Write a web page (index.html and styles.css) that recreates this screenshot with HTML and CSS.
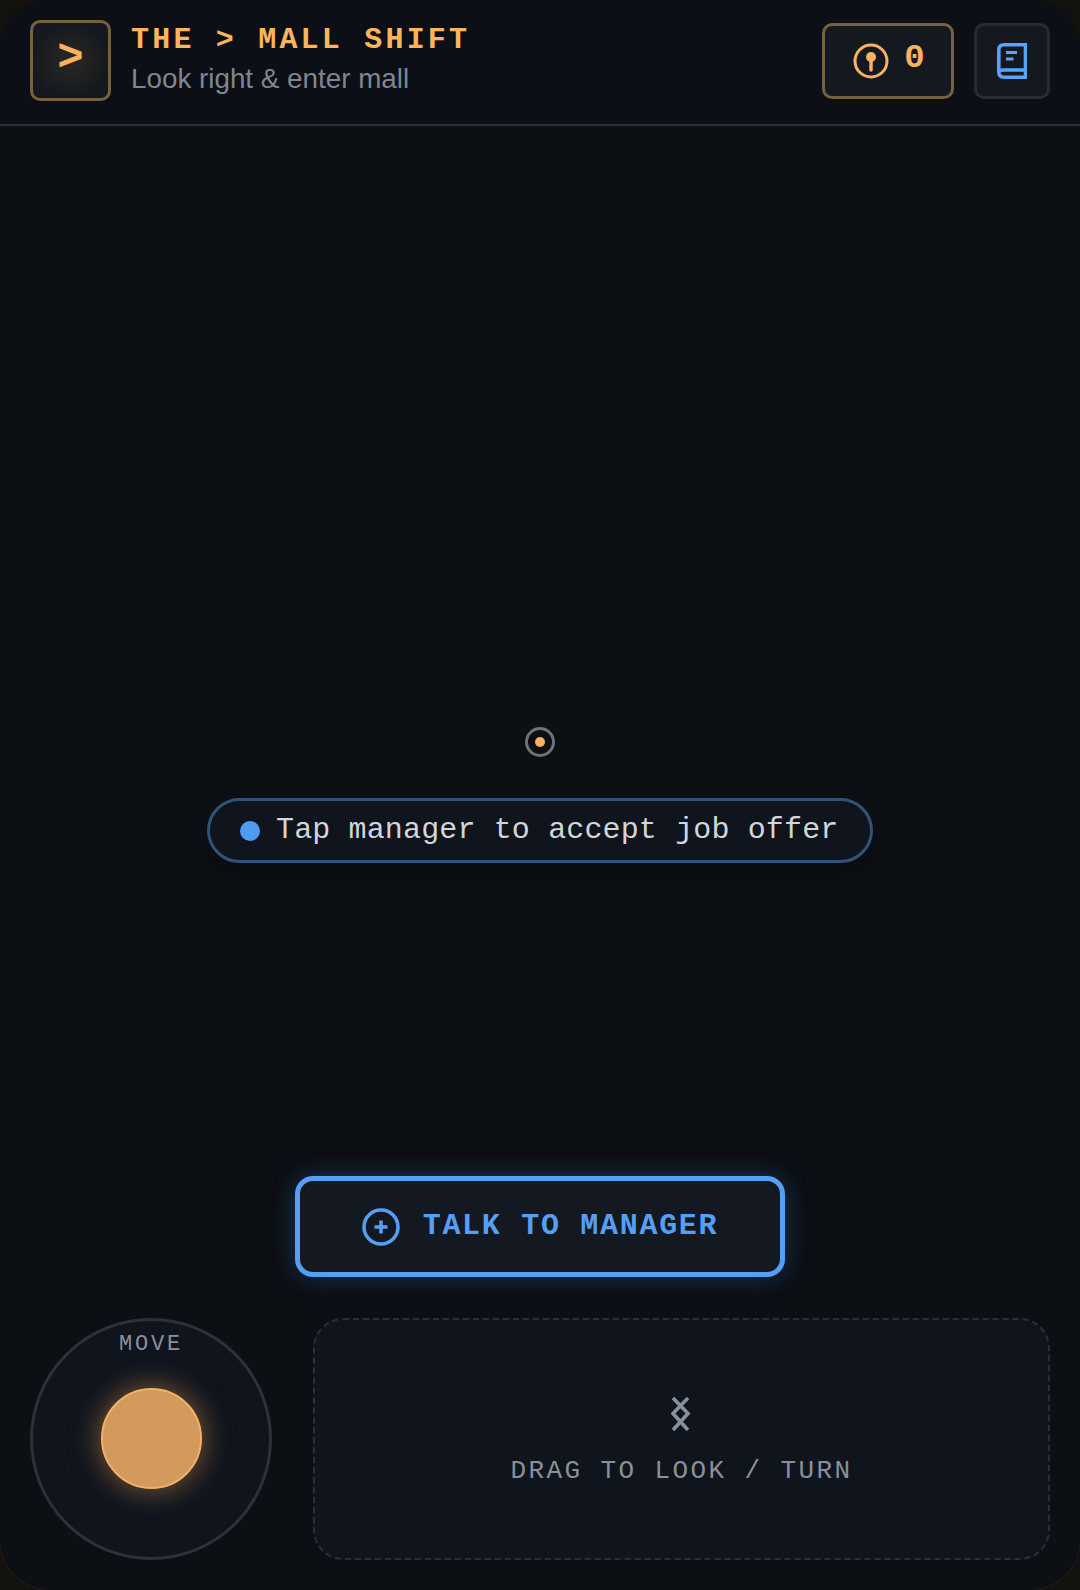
FILE: index.html
```html
<!DOCTYPE html>
<html lang="en">
<head>
<meta charset="utf-8">
<title>The Mall Shift</title>
<link rel="stylesheet" href="styles.css">
</head>
<body>
<div class="shell">
  <header class="topbar">
    <div class="logo">&gt;</div>
    <div class="titles">
      <div class="title">THE &gt; MALL SHIFT</div>
      <div class="subtitle">Look right &amp; enter mall</div>
    </div>
    <div class="chip chip-keys">
      <svg class="icon-key" viewBox="0 0 36 36" aria-hidden="true">
        <circle class="key-ring" cx="18" cy="18" r="16"/>
        <circle class="key-dot" cx="18" cy="14" r="5"/>
        <path class="key-stem" d="M18 15V27"/>
      </svg>
      <span class="key-count">0</span>
    </div>
    <div class="chip chip-book">
      <svg class="icon-book" viewBox="0 0 30 36" aria-hidden="true">
        <path class="book-line" d="M28.5 1.800H7Q1.800 1.800 1.800 7V29Q1.800 34.200 7 34.200H28.500ZM1.800 29.500Q1.800 27 7 27H28.500"/>
        <path class="book-line thin" d="M9 9.500H20M9 16H16.500"/>
      </svg>
    </div>
  </header>

  <main class="stage">
    <div class="reticle"><span class="reticle-dot"></span></div>
    <div class="hint"><span class="hint-dot"></span><span class="hint-text">Tap manager to accept job offer</span></div>
    <button class="action" type="button">
      <svg class="icon-plus" viewBox="0 0 38 38" aria-hidden="true">
        <circle class="plus-ring" cx="19" cy="19" r="17"/>
        <path class="plus-bar" d="M19 12.500V25.500M12.500 19H25.500"/>
      </svg>
      <span class="action-text">TALK TO MANAGER</span>
    </button>
  </main>

  <footer class="controls">
    <div class="joystick">
      <span class="joy-label">MOVE</span>
      <span class="knob"></span>
    </div>
    <div class="lookpad">
      <svg class="icon-drag" viewBox="0 0 20 36" aria-hidden="true">
        <path class="drag-line" d="M2 2L17 17.500L2 34M17 2L2 17.500L17 34"/>
      </svg>
      <span class="look-label">DRAG TO LOOK / TURN</span>
    </div>
  </footer>
</div>
</body>
</html>
```

FILE: styles.css
```css
* { box-sizing: border-box; }
html, body { margin: 0; height: 100%; background: #14120e; }
body { width: 1080px; height: 1590px; overflow: hidden; font-family: "Liberation Mono", monospace; }

.shell {
  width: 1082px;
  height: 1592px;
  margin: -1px;
  display: flex;
  flex-direction: column;
  background: #0c0f14;
  border-radius: 52px;
  box-shadow: inset 0 0 0 1px #211e1a;
  overflow: hidden;
}

.topbar {
  height: 127px;
  flex: none;
  display: flex;
  align-items: center;
  padding: 0 31px 3px;
  background: #0c0f16;
  border-bottom: 2px solid #2a2e38;
}
.logo {
  width: 81px;
  height: 81px;
  flex: none;
  display: flex;
  align-items: center;
  justify-content: center;
  padding-bottom: 5px;
  border: 3px solid #75603f;
  border-radius: 10px;
  background: radial-gradient(circle at 50% 50%, #2b2822 0, #15191f 70%);
  color: #f9b25f;
  font-size: 44px;
  font-weight: 700;
}
.titles { flex: 1; margin-left: 20px; display: flex; flex-direction: column; gap: 4px; margin-top: -1px; }
.title { font-size: 30px; line-height: 34px; font-weight: 700; letter-spacing: 3.200px; color: #fcb55f; white-space: nowrap; }
.subtitle { font-family: "Liberation Sans", sans-serif; font-size: 27.800px; line-height: 35px; color: #7f8693; white-space: nowrap; }

.chip {
  height: 76px;
  margin-top: 1px;
  display: flex;
  align-items: center;
  justify-content: center;
  background: #141920;
  border-radius: 10px;
  flex: none;
}
.chip-keys { width: 132px; gap: 15px; padding-left: 2px; border: 3px solid #75603f; margin-right: 20px; }
.chip-book { width: 76px; border: 3px solid #272b33; }
.icon-key { width: 36px; height: 36px; }
.key-ring { fill: none; stroke: #f9b25f; stroke-width: 3px; }
.key-dot { fill: #f9b25f; }
.key-stem { stroke: #f9b25f; stroke-width: 3.500px; stroke-linecap: round; fill: none; }
.key-count { color: #f9b25f; font-size: 34px; font-weight: 700; line-height: 1; margin-top: -6px; }
.icon-book { width: 30px; height: 36px; }
.book-line { fill: none; stroke: #5aa4f7; stroke-width: 3.600px; }
.book-line.thin { stroke-width: 3px; }

.stage {
  flex: 1;
  display: flex;
  flex-direction: column;
  align-items: center;
  padding-top: 601px;
  min-height: 0;
}
.reticle {
  width: 30px;
  height: 30px;
  flex: none;
  border: 3px solid #6f7277;
  border-radius: 50%;
  display: flex;
  align-items: center;
  justify-content: center;
}
.reticle-dot { width: 10px; height: 10px; border-radius: 50%; background: #f9b25f; }
.hint {
  margin-top: 41px;
  width: 666px;
  height: 65px;
  flex: none;
  display: flex;
  align-items: center;
  gap: 16px;
  padding-left: 30px;
  background: #10141c;
  border: 3px solid #325379;
  border-radius: 33px;
  color: #d2d6da;
  font-size: 30px;
  letter-spacing: .14px;
  white-space: nowrap;
  box-shadow: 0 8px 30px rgba(0, 0, 0, .25);
}
.hint-text { padding-bottom: 2px; }
.hint-dot { width: 20px; height: 20px; border-radius: 50%; background: #4f9af3; flex: none; }
.action {
  margin-top: 313px;
  width: 490px;
  height: 101px;
  flex: none;
  display: flex;
  align-items: center;
  justify-content: center;
  gap: 23px;
  background: #131821;
  border: 5px solid #559ff5;
  border-radius: 18px;
  color: #559ff5;
  font-family: "Liberation Mono", monospace;
  font-size: 30px;
  font-weight: 700;
  letter-spacing: 1.700px;
  box-shadow: 0 0 24px rgba(60, 140, 240, .3);
  padding: 0;
}
.action-text { padding-bottom: 2px; }
.icon-plus { width: 38px; height: 38px; }
.plus-ring { fill: none; stroke: #559ff5; stroke-width: 3.500px; }
.plus-bar { fill: none; stroke: #559ff5; stroke-width: 3.500px; }

.controls {
  flex: none;
  display: flex;
  gap: 41px;
  padding: 0 31px 31px;
}
.joystick {
  position: relative;
  width: 242px;
  height: 242px;
  flex: none;
  display: flex;
  align-items: center;
  justify-content: center;
  background: #10141d;
  border: 3px solid #2d313a;
  border-radius: 50%;
}
.joy-label {
  position: absolute;
  top: 11px;
  left: 0;
  right: 0;
  text-align: center;
  font-size: 22px;
  line-height: 26px;
  letter-spacing: 2.800px;
  color: #8a909c;
}
.knob {
  width: 101px;
  height: 101px;
  margin-top: -2px;
  border-radius: 50%;
  background: #d29a5c;
  border: 2px solid #f5b064;
  box-shadow: 0 0 30px rgba(249, 178, 95, .5);
}
.lookpad {
  flex: 1;
  height: 242px;
  display: flex;
  flex-direction: column;
  align-items: center;
  justify-content: center;
  padding-top: 4px;
  background: #10151d;
  border: 2px dashed #2b2f37;
  border-radius: 30px;
}
.icon-drag { width: 20px; height: 36px; margin-bottom: 24px; margin-right: 2px; }
.drag-line { fill: none; stroke: #8a909a; stroke-width: 3.600px; }
.look-label { font-size: 26px; line-height: 30px; letter-spacing: 2.400px; color: #8a909a; white-space: nowrap; }
```
